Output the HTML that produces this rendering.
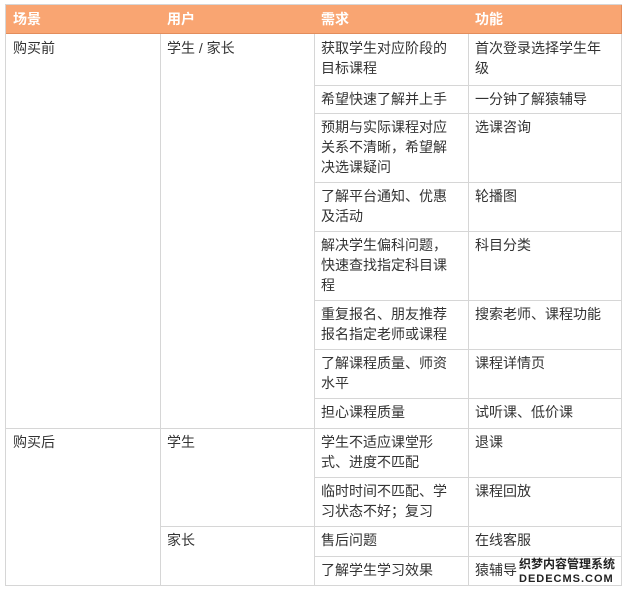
<!DOCTYPE html>
<html><head><meta charset="utf-8"><style>
body{margin:0;width:628px;height:592px;background:#fff;position:relative;overflow:hidden;font-family:"Liberation Sans","Noto Sans CJK SC",sans-serif;font-size:14px;color:#333}
.c{position:absolute;box-sizing:border-box;border-right:1px solid #d6d6d6;border-bottom:1px solid #d6d6d6;padding:4px 14px 0 7px;line-height:20px}
.h{background:#f9a572;color:#fff;font-weight:bold;border-color:#e38d5c;padding-top:4px}
.wm{position:absolute;left:519px;top:557px;width:100px;font-weight:bold;color:#222;text-shadow:1px 1px 0 #fff,-1px -1px 0 #fff,1px -1px 0 #fff,-1px 1px 0 #fff;line-height:15px;overflow:hidden}
</style></head><body>
<div style="position:absolute;left:5px;top:5px;width:1px;height:581px;background:#d6d6d6"></div>
<div style="position:absolute;left:5px;top:4px;width:617px;height:1px;background:#d6d6d6"></div>

<div class="c h" style="left:6px;top:5px;width:155px;height:29px">场景</div>
<div class="c h" style="left:160px;top:5px;width:155px;height:29px">用户</div>
<div class="c h" style="left:314px;top:5px;width:155px;height:29px">需求</div>
<div class="c h" style="left:468px;top:5px;width:154px;height:29px">功能</div>

<div class="c" style="left:6px;top:34px;width:155px;height:395px">购买前</div>
<div class="c" style="left:160px;top:34px;width:155px;height:395px">学生 / 家长</div>
<div class="c" style="left:6px;top:428px;width:155px;height:158px">购买后</div>
<div class="c" style="left:160px;top:428px;width:155px;height:99px">学生</div>
<div class="c" style="left:160px;top:526px;width:155px;height:60px">家长</div>

<div class="c" style="left:314px;top:34px;width:155px;height:52px">获取学生对应阶段的目标课程</div>
<div class="c" style="left:468px;top:34px;width:154px;height:52px">首次登录选择学生年级</div>
<div class="c" style="left:314px;top:85px;width:155px;height:29px">希望快速了解并上手</div>
<div class="c" style="left:468px;top:85px;width:154px;height:29px">一分钟了解猿辅导</div>
<div class="c" style="left:314px;top:113px;width:155px;height:70px">预期与实际课程对应关系不清晰，希望解决选课疑问</div>
<div class="c" style="left:468px;top:113px;width:154px;height:70px">选课咨询</div>
<div class="c" style="left:314px;top:182px;width:155px;height:50px">了解平台通知、优惠及活动</div>
<div class="c" style="left:468px;top:182px;width:154px;height:50px">轮播图</div>
<div class="c" style="left:314px;top:231px;width:155px;height:70px">解决学生偏科问题，快速查找指定科目课程</div>
<div class="c" style="left:468px;top:231px;width:154px;height:70px">科目分类</div>
<div class="c" style="left:314px;top:300px;width:155px;height:50px">重复报名、朋友推荐报名指定老师或课程</div>
<div class="c" style="left:468px;top:300px;width:154px;height:50px">搜索老师、课程功能</div>
<div class="c" style="left:314px;top:349px;width:155px;height:50px">了解课程质量、师资水平</div>
<div class="c" style="left:468px;top:349px;width:154px;height:50px">课程详情页</div>
<div class="c" style="left:314px;top:398px;width:155px;height:31px">担心课程质量</div>
<div class="c" style="left:468px;top:398px;width:154px;height:31px">试听课、低价课</div>
<div class="c" style="left:314px;top:428px;width:155px;height:50px">学生不适应课堂形式、进度不匹配</div>
<div class="c" style="left:468px;top:428px;width:154px;height:50px">退课</div>
<div class="c" style="left:314px;top:477px;width:155px;height:50px">临时时间不匹配、学习状态不好；复习</div>
<div class="c" style="left:468px;top:477px;width:154px;height:50px">课程回放</div>
<div class="c" style="left:314px;top:526px;width:155px;height:31px">售后问题</div>
<div class="c" style="left:468px;top:526px;width:154px;height:31px">在线客服</div>
<div class="c" style="left:314px;top:556px;width:155px;height:30px">了解学生学习效果</div>
<div class="c" style="left:468px;top:556px;width:154px;height:30px">猿辅导</div>

<div class="wm"><div style="font-size:12px">织梦内容管理系统</div><div style="font-size:11px;letter-spacing:1px">DEDECMS.COM</div></div>
</body></html>
